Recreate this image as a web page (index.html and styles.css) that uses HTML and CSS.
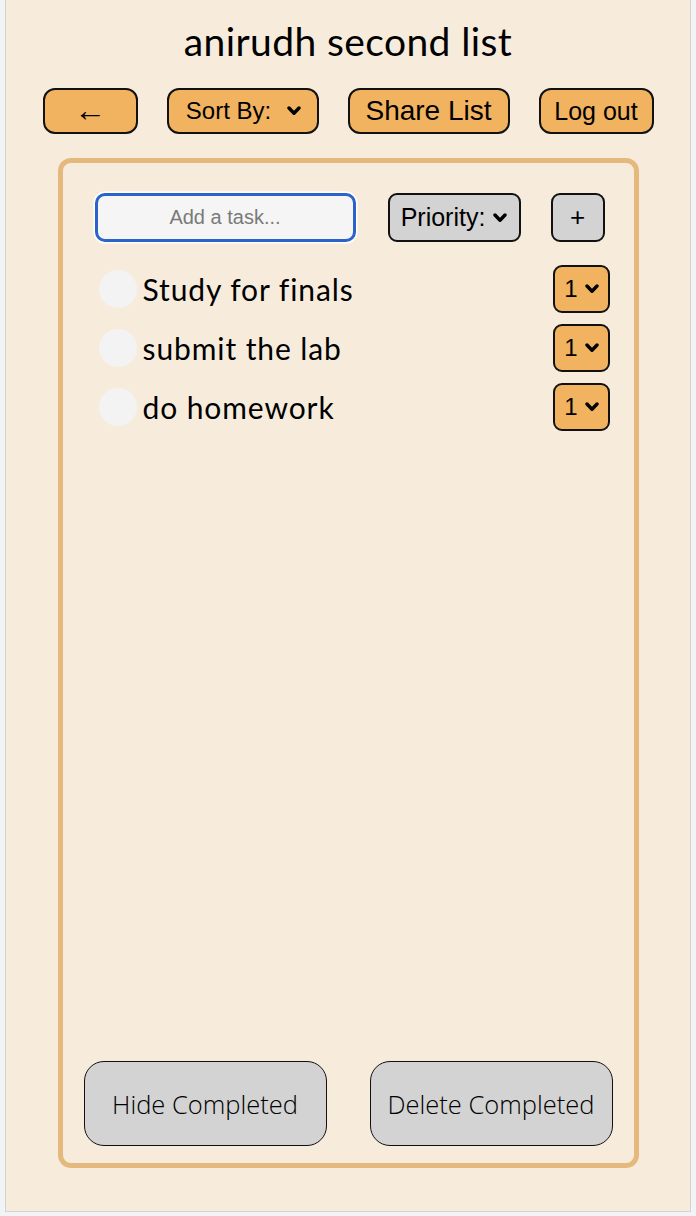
FILE: index.html
```html
<!DOCTYPE html>
<html lang="en">
<head>
<meta charset="utf-8">
<title>anirudh second list</title>
<link rel="stylesheet" href="styles.css">
</head>
<body>
<div class="page">
  <h1 class="title">anirudh second list</h1>
  <div class="toolbar">
    <button class="btn btn-back">&larr;</button>
    <div class="select select-sort">Sort By:
      <svg class="chev" width="14" height="10" viewBox="0 0 14 10"><path d="M2 2 L7 7.2 L12 2" fill="none" stroke="#000" stroke-width="3.4" stroke-linecap="round" stroke-linejoin="round"/></svg>
    </div>
    <button class="btn btn-share">Share List</button>
    <button class="btn btn-logout">Log out</button>
  </div>
  <div class="card">
    <div class="add-row">
      <div class="task-input">Add a task...</div>
      <div class="select select-priority">Priority:
        <svg class="chev" width="14" height="10" viewBox="0 0 14 10"><path d="M2 2 L7 7.2 L12 2" fill="none" stroke="#000" stroke-width="3.4" stroke-linecap="round" stroke-linejoin="round"/></svg>
      </div>
      <button class="btn btn-add">+</button>
    </div>
    <ul class="tasks">
      <li class="task">
        <span class="check"></span>
        <span class="task-text">Study for finals</span>
        <div class="select select-num">1
          <svg class="chev" width="14" height="10" viewBox="0 0 14 10"><path d="M2 2 L7 7.2 L12 2" fill="none" stroke="#000" stroke-width="3.4" stroke-linecap="round" stroke-linejoin="round"/></svg>
        </div>
      </li>
      <li class="task">
        <span class="check"></span>
        <span class="task-text">submit the lab</span>
        <div class="select select-num">1
          <svg class="chev" width="14" height="10" viewBox="0 0 14 10"><path d="M2 2 L7 7.2 L12 2" fill="none" stroke="#000" stroke-width="3.4" stroke-linecap="round" stroke-linejoin="round"/></svg>
        </div>
      </li>
      <li class="task">
        <span class="check"></span>
        <span class="task-text">do homework</span>
        <div class="select select-num">1
          <svg class="chev" width="14" height="10" viewBox="0 0 14 10"><path d="M2 2 L7 7.2 L12 2" fill="none" stroke="#000" stroke-width="3.4" stroke-linecap="round" stroke-linejoin="round"/></svg>
        </div>
      </li>
    </ul>
    <div class="footer">
      <button class="btn-big">Hide Completed</button>
      <button class="btn-big">Delete Completed</button>
    </div>
  </div>
</div>
</body>
</html>
```
FILE: styles.css
```css
* { box-sizing: border-box; }
html, body { margin: 0; padding: 0; }
body {
  background: #f2f3f5;
  font-family: "Liberation Sans", Arial, sans-serif;
  color: #000;
}
.page {
  margin: 0 5px;
  width: 686px;
  height: 1212px;
  background: #f7ecdc;
  border: 1px solid #d2d2d4;
  border-top: none;
  padding-top: 18px;
}
.title {
  margin: 0;
  text-align: center;
  font-family: "Lato", sans-serif;
  font-weight: 400;
  font-size: 39px;
  line-height: 46px;
  letter-spacing: 0.4px;
}
.toolbar {
  display: flex;
  justify-content: center;
  gap: 29px;
  margin-top: 24px;
}
.btn, .select {
  font-family: "Liberation Sans", Arial, sans-serif;
  background: #f2b360;
  border: 2px solid #111;
  border-radius: 12px;
  height: 46px;
  padding: 0;
  color: #000;
  display: flex;
  align-items: center;
  justify-content: center;
}
.btn-back { width: 95px; font-size: 32px; line-height: 1; padding-bottom: 2px; }
.select { gap: 16px; font-size: 24px; }
.select-sort { width: 152px; padding-left: 2px; }
.btn-share { width: 162px; font-size: 28px; }
.btn-logout { width: 115px; font-size: 25px; }
.card {
  width: 581px;
  height: 1010px;
  margin: 24px auto 0;
  border: 5px solid #e5b97d;
  border-radius: 13px;
  display: flex;
  flex-direction: column;
  padding: 30px 21px 17px 21px;
}
.add-row {
  display: flex;
  align-items: center;
  padding-left: 11px;
}
.task-input {
  width: 261px;
  height: 49px;
  border: 3px solid #2b63c9;
  box-shadow: 0 0 0 1.5px #fff;
  border-radius: 10px;
  background: #f5f5f5;
  color: #7a7a7a;
  font-size: 20px;
  display: flex;
  align-items: center;
  justify-content: center;
}
.select-priority {
  width: 133px;
  height: 49px;
  background: #d3d3d3;
  border-radius: 9px;
  margin-left: 32px;
  gap: 8px;
  font-size: 25px;
}
.btn-add {
  width: 54px;
  height: 49px;
  background: #d3d3d3;
  border-radius: 9px;
  margin-left: 30px;
  font-size: 26px;
}
.tasks {
  list-style: none;
  margin: 17px 0 0;
  padding: 0 3px 0 15px;
  flex: 1;
}
.task {
  display: flex;
  align-items: center;
  height: 59px;
}
.check {
  width: 38px;
  height: 38px;
  border-radius: 50%;
  background: #f3f3f3;
  flex: none;
}
.task-text {
  font-family: "Lato", sans-serif;
  font-size: 30px;
  margin-left: 6px;
  flex: 1;
  letter-spacing: 0.9px;
}
.select-num {
  width: 57px;
  height: 48px;
  border-radius: 9px;
  gap: 7px;
  font-size: 24px;
  padding-left: 1px;
}
.footer {
  display: flex;
  justify-content: space-between;
}
.btn-big {
  width: 243px;
  height: 85px;
  background: #d3d3d3;
  border: 1.5px solid #111;
  border-radius: 20px;
  font-family: "Open Sans", sans-serif;
  font-weight: 300;
  font-size: 25.5px;
  color: #000;
  padding: 0;
}
```
